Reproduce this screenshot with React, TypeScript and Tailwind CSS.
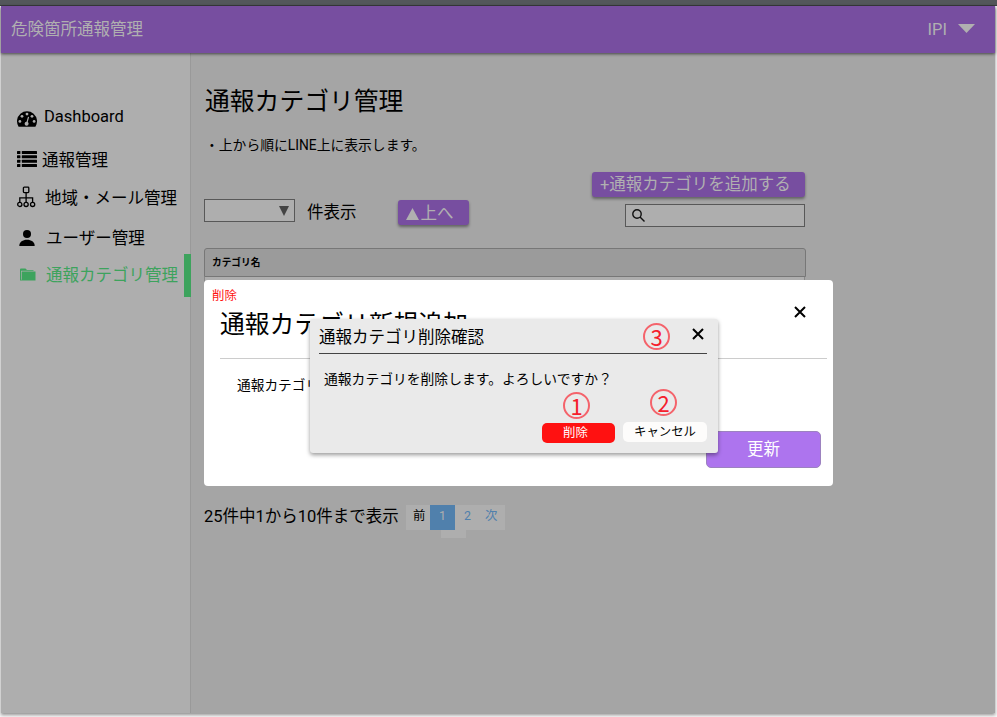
import type { ReactNode } from "react";

function GaugeIcon() {
  return (
    <svg width="20" height="16" viewBox="0 0 20 16">
      <path d="M1.600 16A10 10 0 1 1 18.400 16z" transform="translate(0 -0.300)" fill="currentColor" />
      <g fill="#aeaeae">
        <circle cx="2.900" cy="10.400" r="1.400" />
        <circle cx="5" cy="5.300" r="1.400" />
        <circle cx="10" cy="3.100" r="1.400" />
        <circle cx="15" cy="5.300" r="1.400" />
        <circle cx="17.100" cy="10.400" r="1.400" />
        <circle cx="9.600" cy="12.800" r="2" />
      </g>
      <path d="M9.700 12.500L11.400 6.300" stroke="#aeaeae" strokeWidth="1.200" strokeLinecap="round" />
    </svg>
  );
}

function ListIcon() {
  return (
    <svg width="20" height="16" viewBox="0 0 20 16" fill="currentColor">
      {[0, 4.3, 8.7, 13].map((y) => (
        <g key={y}>
          <rect x="0" y={y} width="3.4" height="3" rx="0.5" />
          <rect x="4.8" y={y} width="15.2" height="3" rx="0.5" />
        </g>
      ))}
    </svg>
  );
}

function OrgIcon() {
  return (
    <svg width="20" height="22" viewBox="0 0 20 22" fill="none" stroke="currentColor" strokeWidth="1.3">
      <rect x="6.4" y="1.2" width="5.4" height="5.4" rx="0.8" />
      <path d="M9.1 6.6V16M2.800 16v-4.200h12.800V16" />
      <circle cx="2.8" cy="18.4" r="2.1" />
      <circle cx="9.1" cy="18.4" r="2.1" />
      <circle cx="15.6" cy="18.4" r="2.1" />
    </svg>
  );
}

function PersonIcon() {
  return (
    <svg width="16" height="16" viewBox="0 0 16 16" fill="currentColor">
      <circle cx="8" cy="4" r="4" />
      <path d="M0.3 16c0-4 3.4-6.2 7.7-6.2s7.700 2.200 7.700 6.200z" />
    </svg>
  );
}

function FolderIcon() {
  return (
    <svg width="17" height="13" viewBox="0 0 17 13" fill="currentColor">
      <path d="M1 12V1.500Q1 0.500 2 0.500H6.500L8 2H14.500V2.800H2V12z" />
      <path d="M2.700 3.400H16.500V12.500H1V11.700H2.700z" />
    </svg>
  );
}

function CloseIcon() {
  return (
    <svg width="12" height="12" viewBox="0 0 12 12" fill="none" stroke="currentColor" strokeWidth="2">
      <path d="M1 1L11 11M11 1L1 11" />
    </svg>
  );
}

function NavItem({ icon, label, className }: { icon: ReactNode; label: string; className: string }) {
  return (
    <li className={`flex items-center ${className}`}>
      {icon}
      <span>{label}</span>
    </li>
  );
}

function Sidebar() {
  return (
    <nav className="w-[190px] shrink-0 border-r border-[#999] bg-[#aeaeae] pt-[43px]">
      <ul className="text-[16.500px] leading-6 whitespace-nowrap">
        <NavItem className="h-[42px] gap-[7px] pl-4" label="Dashboard" icon={<span className="mt-[3px]"><GaugeIcon /></span>} />
        <NavItem className="h-[42px] gap-[5px] pt-1 pl-4" label="通報管理" icon={<span className="-mt-1"><ListIcon /></span>} />
        <NavItem className="h-9 gap-2 pt-0.5 pl-4" label="地域・メール管理" icon={<span className="-mt-[5px]"><OrgIcon /></span>} />
        <NavItem className="h-[38px] gap-[11px] pt-2 pl-[18px]" label="ユーザー管理" icon={<span className="-mt-0.5"><PersonIcon /></span>} />
        <NavItem className="-mr-px h-[43px] gap-[10px] border-r-[7px] border-[#3da35d] pl-[18px] text-[#3da35d]" label="通報カテゴリ管理" icon={<span className="-mt-0.5"><FolderIcon /></span>} />
      </ul>
    </nav>
  );
}

function Controls() {
  return (
    <div className="mt-[15px] flex w-[601px] justify-between">
      <div className="flex pt-[27px]">
        <div className="flex h-[23px] w-[91px] items-center justify-end border border-[#585858] bg-[#aeaeae] pr-[5px]">
          <svg width="10" height="10" viewBox="0 0 10 10" fill="#444"><path d="M0 0H10L5 10z" /></svg>
        </div>
        <span className="mt-[2px] ml-3 h-6 text-[16.500px] leading-6">件表示</span>
        <button className="mt-px ml-[41px] flex h-[25px] w-[71px] items-center rounded-[3px] bg-[#774ea0] pt-0.5 pl-2 text-[16.500px] leading-6 text-[#b0b0b0] shadow-[0_2px_3px_#0006]">
          <svg className="mr-0.5" width="13" height="12" viewBox="0 0 13 12" fill="currentColor"><path d="M6.500 0L13 12H0z" /></svg>
          上へ
        </button>
      </div>
      <div className="flex flex-col items-end">
        <button className="h-[25px] w-[213px] rounded-[3px] bg-[#774ea0] pl-2 text-left text-[16.500px] leading-6 whitespace-nowrap text-[#b0b0b0] shadow-[0_2px_3px_#0006]">+通報カテゴリを追加する</button>
        <div className="mt-[7px] flex h-[23px] w-[180px] items-center border border-[#585858] bg-[#aeaeae] pl-1.5">
          <svg width="13" height="13" viewBox="0 0 13 13" fill="none" stroke="#111" strokeWidth="1.400"><circle cx="5" cy="5" r="4.200" /><path d="M8 8l4.500 4.500" /></svg>
        </div>
      </div>
    </div>
  );
}

function Pagination() {
  return (
    <div className="mt-[208px] flex items-start">
      <span className="w-[202px] text-[16.500px] leading-6 whitespace-nowrap">25件中1から10件まで表示</span>
      <div className="flex h-[25px] bg-[#aeaeae] text-[12.400px] leading-[22px]">
        <span className="w-6 pl-[7px]">前</span>
        <span className="w-[25px] bg-[#5080ac] text-center text-[#aeaeae]">1</span>
        <span className="w-[25px] text-center text-[#5080ac]">2</span>
        <span className="w-[25px] pl-[5px] text-[#5080ac]">次</span>
      </div>
    </div>
  );
}

function Callout({ value, className }: { value: number; className: string }) {
  return (
    <span className={`absolute flex size-[27px] items-center justify-center rounded-full border-2 border-[#f4636b] pb-[2px] text-[22px] leading-none text-[#f5202c] [font-family:'Noto_Sans_CJK_JP',sans-serif] ${className}`}>
      {value}
    </span>
  );
}

function ConfirmDialog() {
  return (
    <section className="absolute top-[319px] left-[310px] h-[134px] w-[408px] rounded-[3px] bg-[#eaeaea] pt-[5px] pr-[11px] pl-[9px] shadow-[0_2px_4px_#0006]">
      <header className="flex h-[30px] justify-between border-b border-[#444]">
        <h2 className="mt-[2px] text-[16.500px] leading-6">通報カテゴリ削除確認</h2>
        <button className="mt-1 mr-[3px] h-3"><CloseIcon /></button>
      </header>
      <p className="mt-[15px] pl-[5px] text-[13.800px] leading-5">通報カテゴリを削除します。よろしいですか？</p>
      <div className="mt-8 flex items-start justify-end gap-2">
        <button className="mt-[2px] h-5 w-[73px] rounded-[5px] bg-[#ff1111] pr-1.5 text-[12.400px] leading-5 text-white">削除</button>
        <button className="mt-px h-5 w-[84px] rounded-[5px] bg-[#fdfcfb] text-[12.400px] leading-5">キャンセル</button>
      </div>
      <Callout value={1} className="top-[73px] left-[253px]" />
      <Callout value={2} className="top-[70px] left-[340px]" />
      <Callout value={3} className="top-[4px] left-[333px]" />
    </section>
  );
}

function EditDialog() {
  return (
    <section className="absolute top-[280px] left-[204px] flex h-[206px] w-[629px] flex-col rounded-[4px] bg-white">
      <span className="mt-1.5 ml-2 h-[19px] text-[12.400px] leading-[19px] text-[#ff1111]">削除</span>
      <header className="mr-1.5 ml-4 flex h-[54px] justify-between border-b border-[#ccc]">
        <h2 className="mt-[2px] text-[24.800px] leading-9">通報カテゴリ新規追加</h2>
        <button className="mt-[1px] mr-[21px] h-3"><CloseIcon /></button>
      </header>
      <label className="mt-4 ml-[33px] text-[13.700px] leading-5">通報カテゴリ名</label>
      <button className="mt-[36px] mr-3 h-[37px] w-[115px] self-end rounded-[5px] border border-[#9c82bf] bg-[#ad74ee] pt-0.5 text-[16.500px] text-white">更新</button>
    </section>
  );
}

export default function App() {
  return (
    <div className="relative h-[717px] w-[997px] overflow-hidden bg-[#f7f7f7] text-black [font-family:Roboto,'Noto_Sans_CJK_JP',sans-serif]">
      <div className="h-1.5 border-b border-[#3b3e40] bg-[#53575a]" />
      <div className="mr-0.5 ml-px flex h-[707px] flex-col bg-[#a5a5a5] shadow-[0_2px_3px_#0006]">
        <header className="z-10 flex h-[47px] shrink-0 items-center justify-between bg-[#774ea0] pr-5 pl-[10px] text-[16.500px] text-[#b0b0b0] shadow-[0_1px_3px_#0009]">
          <h1 className="pt-0.5">危険箇所通報管理</h1>
          <div className="flex items-center gap-[11px]">
            <span className="pt-0.5">IPI</span>
            <svg className="-mt-0.5" width="17" height="9" viewBox="0 0 17 9" fill="currentColor"><path d="M0 0H17L8.500 9z" /></svg>
          </div>
        </header>
        <div className="flex grow">
          <Sidebar />
          <main className="pt-[31px] pl-[13px]">
            <h2 className="pl-px text-[24.800px] leading-9">通報カテゴリ管理</h2>
            <p className="mt-[15px] pl-px text-[13.800px] leading-5">・上から順にLINE上に表示します。</p>
            <div className="pt-[2px]"><Controls /></div>
            <div className="mt-[21px] h-[29px] w-[602px] rounded-t-[3px] border border-[#777] bg-[#9b9b9b] pl-[7px] text-[9.700px] leading-[27px] font-bold">カテゴリ名</div>
            <div className="h-5 w-[601px] border-x border-[#888] bg-[#aeaeae]" />
            <Pagination />
            <div className="ml-[237px] h-2 w-[25px] bg-[#aeaeae]" />
          </main>
        </div>
      </div>
      <EditDialog />
      <ConfirmDialog />
    </div>
  );
}
